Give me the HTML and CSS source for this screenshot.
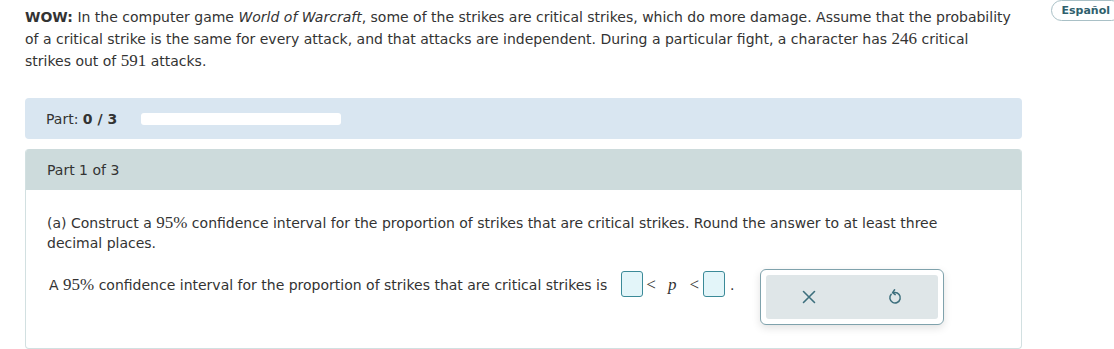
FILE: index.html
```html
<!DOCTYPE html>
<html>
<head>
<meta charset="utf-8">
<link rel="stylesheet" href="styles.css">
</head>
<body>
<div class="page">
  <div class="top">
    <p class="intro"><b>WOW:</b> In the computer game <i>World of Warcraft</i>, some of the strikes are critical strikes, which do more damage. Assume that the probability of a critical strike is the same for every attack, and that attacks are independent. During a particular fight, a character has <span class="m">246</span> critical strikes out of <span class="m">591</span> attacks.</p>
    <button class="lang">Español</button>
  </div>

  <div class="main">
    <div class="progress">
      <span class="plabel">Part: <b>0 / 3</b></span>
      <span class="pbar"></span>
    </div>

    <div class="card">
      <div class="card-head">Part 1 of 3</div>
      <div class="card-body">
        <p class="q">(a) Construct a <span class="m">95%</span> confidence interval for the proportion of strikes that are critical strikes. Round the answer to at least three decimal places.</p>
        <div class="answer">
          <span class="atext">A <span class="m">95%</span> confidence interval for the proportion of strikes that are critical strikes is</span>
          <span class="box"></span>
          <span class="rel"><span class="op">&lt;</span><i class="var">p</i><span class="op">&lt;</span></span>
          <span class="box box2"></span>
          <span class="dot">.</span>
          <div class="tools">
            <div class="tools-in">
              <svg width="16" height="16" viewBox="0 0 16 16"><path d="M2.5 2.5 L13.5 13.5 M13.5 2.5 L2.5 13.5" stroke="#3d6f7d" stroke-width="1.6" fill="none" stroke-linecap="round"/></svg>
              <svg width="16" height="18" viewBox="0 0 16 18"><path d="M4.2 6.3 A5.2 5.2 0 1 0 8 4.6 L6.2 4.6" stroke="#3d6f7d" stroke-width="1.5" fill="none" stroke-linecap="round"/><path d="M7.6 1.8 L5.6 4.6 L8.2 6.6" stroke="#3d6f7d" stroke-width="1.5" fill="none" stroke-linecap="round" stroke-linejoin="round"/></svg>
            </div>
          </div>
        </div>
      </div>
    </div>
  </div>
</div>
</body>
</html>
```

FILE: styles.css
```css
html, body {
  margin: 0;
  padding: 0;
  background: #fff;
  overflow: hidden;
}
body {
  font-family: "DejaVu Sans", Verdana, sans-serif;
  font-size: 14px;
  color: #333;
}
.page {
  width: 1114px;
}
.top {
  display: flex;
  justify-content: space-between;
  align-items: flex-start;
}
.intro {
  margin: 6px 9px 0 25px;
  width: 988px;
  flex: none;
  line-height: 22px;
}
.m {
  font-family: "Liberation Serif", "Times New Roman", serif;
  font-size: 17px;
}
.lang {
  flex: none;
  margin: 0 -8px 0 0;
  height: 21px;
  padding: 0 11px 0 9px;
  border: 1px solid #a9c0c6;
  border-radius: 11px;
  background: #fff;
  color: #2f5f6d;
  font-family: "DejaVu Sans", sans-serif;
  font-size: 11px;
  font-weight: bold;
  line-height: 19px;
}
.main {
  margin: 26px 0 0 25px;
  width: 997px;
}
.progress {
  height: 41px;
  background: #d9e6f1;
  border-radius: 4px;
  display: flex;
  align-items: center;
  padding-left: 21px;
  gap: 24px;
}
.pbar {
  width: 200px;
  height: 12px;
  background: #fff;
  border-radius: 3px;
}
.card {
  margin-top: 10px;
  border-radius: 4px;
  border: 1px solid #d2e0e1;
  border-top: none;
  overflow: hidden;
}
.card-head {
  height: 41px;
  background: #cddbdc;
  display: flex;
  align-items: center;
  padding-left: 21px;
}
.card-body {
  padding: 23px 21px 23px 21px;
}
.q {
  margin: 0;
  width: 910px;
  line-height: 20px;
}
.answer {
  margin-top: 16px;
  display: flex;
  align-items: flex-start;
}
.atext {
  margin: 3px 0 0 2px;
  line-height: 26px;
}
.box {
  display: inline-block;
  flex: none;
  width: 20px;
  height: 24px;
  margin: 2px 0 0 14px;
  background: #e3f5f9;
  border: 1px solid #3b8a98;
  border-radius: 3px;
}
.box2 {
  margin-left: 4px;
}
.rel {
  margin: 3px 0 0 3px;
  line-height: 26px;
  font-family: "Liberation Serif", "Times New Roman", serif;
  font-size: 17px;
  display: flex;
}
.var {
  margin: 0 13px 0 12px;
}
.dot {
  margin: 3px 0 0 5px;
  line-height: 26px;
}
.tools {
  margin-left: 26px;
  padding: 5px;
  border: 1px solid #7fa2ac;
  border-radius: 6px;
  box-shadow: 0 3px 8px rgba(0,0,0,0.12);
  background: #fff;
}
.tools-in {
  width: 172px;
  height: 44px;
  background: #dfe6e8;
  border-radius: 3px;
  display: flex;
  align-items: center;
  justify-content: space-around;
}
```
